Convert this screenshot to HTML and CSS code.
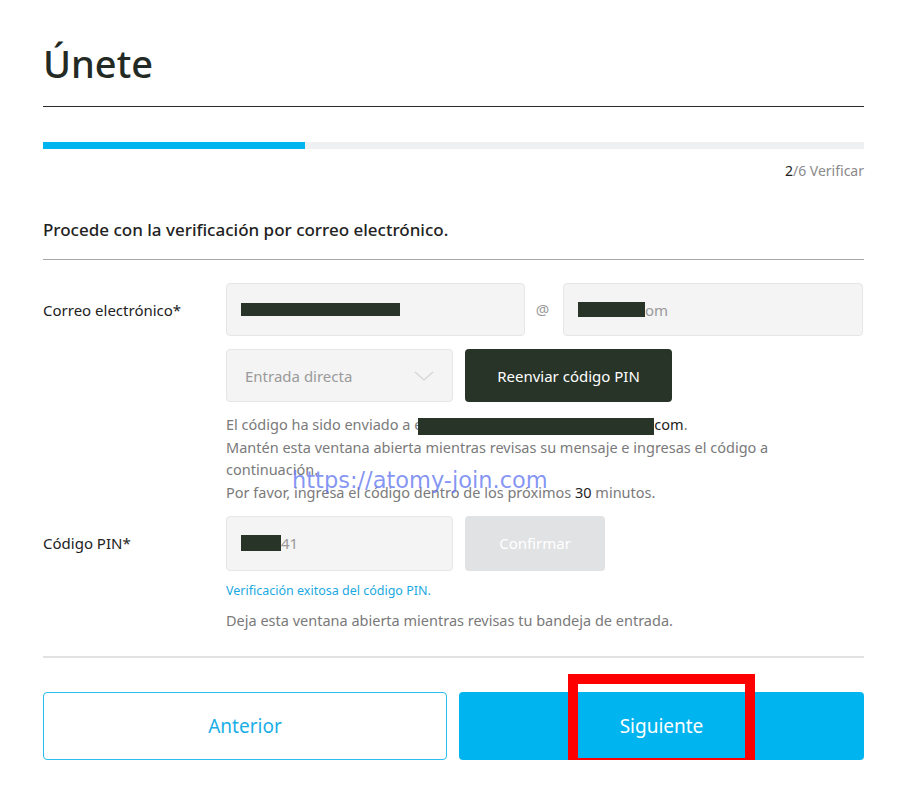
FILE: index.html
```html
<!DOCTYPE html>
<html lang="es">
<head>
<meta charset="utf-8">
<title>Únete</title>
<link rel="stylesheet" href="styles.css">
</head>
<body>
<div class="page">
  <h1 class="title">Únete</h1>
  <div class="progress"><div class="progress-fill" style="width:262px"></div></div>
  <div class="step"><span class="step-cur">2</span>/6 Verificar</div>
  <p class="lead">Procede con la verificación por correo electrónico.</p>

  <div class="form">
    <div class="row row-email">
      <div class="label">Correo electrónico*</div>
      <div class="email-fields">
        <div class="input input-user"><span class="redact redact-user"></span></div>
        <div class="at">@</div>
        <div class="input input-domain"><span class="redact redact-domain"></span><span class="muted">om</span></div>
      </div>
    </div>
    <div class="row row-select">
      <div class="label"></div>
      <div class="select-line">
        <div class="input select">
          <span class="placeholder">Entrada directa</span>
          <svg class="chevron" width="20" height="10" viewBox="0 0 20 10"><path d="M1 1 L10 9 L19 1" fill="none" stroke="#d4d4d4" stroke-width="1.2"/></svg>
        </div>
        <button class="btn-dark">Reenviar código PIN</button>
      </div>
    </div>
    <div class="row">
      <div class="label"></div>
      <div class="help">
        <p>El código ha sido enviado a e<span class="redact redact-mail"></span><span class="dark">com</span>.</p>
        <p>Mantén esta ventana abierta mientras revisas su mensaje e ingresas el código a continuación.</p>
        <p>Por favor, ingresa el código dentro de los próximos <span class="dark">30</span> minutos.</p>
      </div>
    </div>
    <div class="row row-pin">
      <div class="label">Código PIN*</div>
      <div class="select-line">
        <div class="input input-pin"><span class="redact redact-pin"></span><span class="muted">41</span></div>
        <button class="btn-disabled">Confirmar</button>
      </div>
    </div>
    <div class="row">
      <div class="label"></div>
      <div>
        <p class="success">Verificación exitosa del código PIN.</p>
        <p class="note">Deja esta ventana abierta mientras revisas tu bandeja de entrada.</p>
      </div>
    </div>
  </div>

  <div class="actions">
    <button class="btn-outline">Anterior</button>
    <button class="btn-primary">Siguiente</button>
  </div>

  <div class="watermark">https://atomy-join.com</div>
  <div class="highlight"></div>
</div>
</body>
</html>
```
FILE: styles.css
```css
* { box-sizing: border-box; }
html, body { margin: 0; padding: 0; background: #fff; }
body { font-family: "Noto Sans", "Open Sans", sans-serif; color: #222; }
p { margin: 0; }

.page {
  position: relative;
  width: 900px;
  padding: 37px 36px 0 43px;
}

.title {
  margin: 0;
  font-size: 38px;
  line-height: 52px;
  font-weight: 500;
  color: #232a23;
  padding-bottom: 17px;
  border-bottom: 1px solid #2a2a2a;
}

.progress {
  margin-top: 35px;
  height: 7px;
  background: #eef0f1;
}
.progress-fill { height: 7px; background: #00b4ef; }

.step {
  margin-top: 12px;
  text-align: right;
  font-size: 14px;
  line-height: 20px;
  color: #8a8a8a;
}
.step-cur { color: #222; }

.lead {
  margin-top: 37px;
  font-size: 17px;
  line-height: 24px;
  font-weight: 500;
  color: #222;
  padding-bottom: 17px;
  border-bottom: 1px solid #a8a8a8;
}

.form { padding-top: 23px; }

.row {
  display: grid;
  grid-template-columns: 183px 1fr;
  align-items: center;
}
.row-select { margin-top: 13px; }
.row-select + .row { margin-top: 11px; align-items: start; }
.row-pin { margin-top: 12px; }
.row-pin + .row { margin-top: 11px; align-items: start; }

.label { font-size: 15px; color: #222; }

.email-fields {
  display: grid;
  grid-template-columns: 299px 38px 300px;
}
.at { text-align: center; color: #9a9a9a; font-size: 15px; line-height: 53px; padding-right: 3px; }

.input {
  height: 53px;
  background: #f4f4f4;
  border: 1px solid #e6e6e6;
  border-radius: 4px;
  display: flex;
  align-items: center;
  padding-left: 14px;
  font-size: 15px;
  color: #9a9a9a;
}
.input-pin { height: 55px; }

.redact { display: inline-block; background: #283428; }
.redact-user { width: 159px; height: 13px; }
.redact-domain { width: 67px; height: 15px; }
.redact-mail { width: 236px; height: 17px; vertical-align: -5px; margin-left: -4px; }
.redact-pin { width: 40px; height: 16px; }
.muted { color: #9a9a9a; }
.dark { color: #222; }

.select-line { display: flex; gap: 12px; }
.select { width: 227px; justify-content: space-between; padding: 0 18px 0 18px; }
.placeholder { color: #9a9a9a; }
.input-pin { width: 227px; }

.btn-dark {
  width: 207px;
  height: 53px;
  border: none;
  border-radius: 4px;
  background: #283428;
  color: #fff;
  font-family: inherit;
  font-size: 15px;
}
.btn-disabled {
  width: 140px;
  height: 55px;
  border: none;
  border-radius: 4px;
  background: #e1e2e4;
  color: #fff;
  font-family: inherit;
  font-size: 15px;
}

.help { font-size: 14.5px; line-height: 22.7px; color: #7a7a7a; }
.success { font-size: 12.5px; line-height: 18px; color: #1aa9e0; }
.note { margin-top: 9px; font-size: 14.5px; line-height: 23px; color: #7a7a7a; }

.actions {
  margin-top: 24px;
  border-top: 2px solid #e2e2e2;
  padding-top: 34px;
  display: grid;
  grid-template-columns: 404px 405px;
  gap: 12px;
}
.btn-outline, .btn-primary {
  height: 68px;
  border-radius: 4px;
  font-family: inherit;
  font-size: 19px;
}
.btn-outline { background: #fff; border: 1px solid #2bbcf0; color: #1aaee6; }
.btn-primary { background: #00b4ef; border: none; color: #fff; }

.watermark {
  position: absolute;
  left: 292px;
  top: 466px;
  font-family: "DejaVu Sans", sans-serif;
  font-size: 22.5px;
  line-height: 28px;
  font-weight: 500;
  color: rgba(100, 120, 240, 0.78);
  white-space: nowrap;
}

.highlight {
  position: absolute;
  left: 568px;
  top: 674px;
  width: 187px;
  height: 94px;
  border: 10px solid #ff0000;
}
```
